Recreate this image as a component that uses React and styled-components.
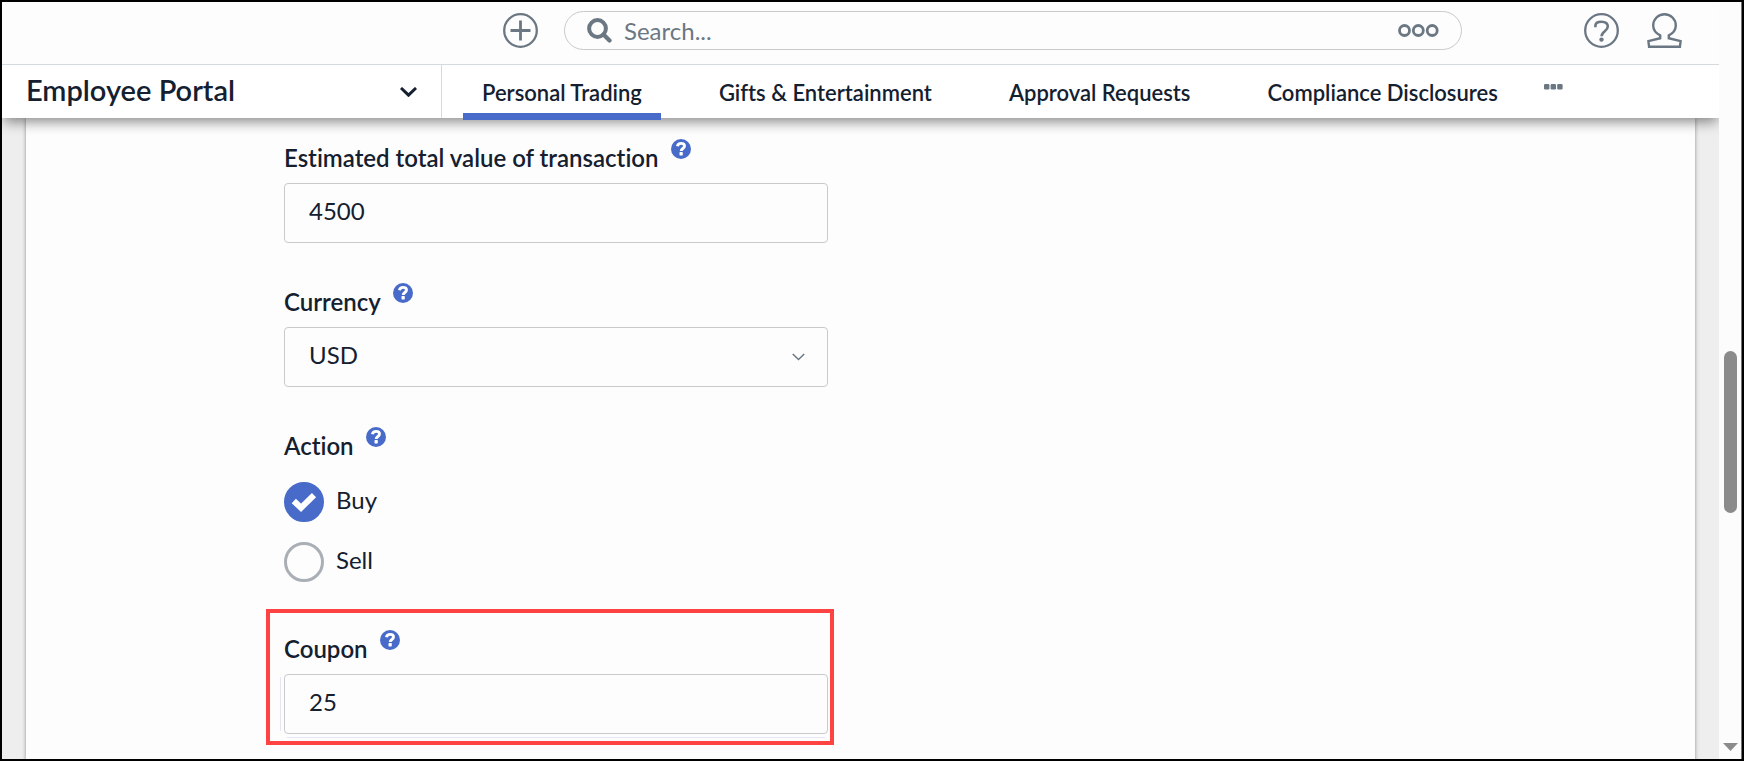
import React, { useState } from 'react';
import styled, { createGlobalStyle } from 'styled-components';

const colors = {
  ink: '#14202f',
  slate: '#6b7782',
  blue: '#486bc9',
  line: '#d5dade',
  border: '#c8cacc',
  panel: '#fdfdfe',
  highlight: '#ff4242',
};

const GlobalStyle = createGlobalStyle`
  *, *::before, *::after {
    box-sizing: border-box;
  }

  body {
    margin: 0;
    color: ${colors.ink};
    font-family: Lato, 'Open Sans', sans-serif;
    font-size: 24px;
    font-variant-ligatures: none;
  }

  button, input, select {
    margin: 0;
    color: inherit;
    font: inherit;
  }
`;

const Frame = styled.div`
  display: flex;
  height: 100vh;
  border: 2px solid #000;
  overflow: hidden;
`;

const Page = styled.div`
  flex: 1;
  min-width: 0;
  display: flex;
  flex-direction: column;
  background: #eee;
  overflow: hidden;
`;

const Header = styled.header`
  position: relative;
  z-index: 1;
  flex: none;
  background: #fff;
  box-shadow: 0 6px 12px -2px rgba(0, 0, 0, 0.45);
`;

const TopBar = styled.div`
  display: flex;
  align-items: center;
  height: 63px;
  padding: 0 37px 6px 501px;
  border-bottom: 1px solid ${colors.line};
  background: ${colors.panel};
`;

const IconButton = styled.button`
  display: flex;
  flex: none;
  padding: 0;
  border: 0;
  background: none;
  color: ${colors.slate};
  cursor: pointer;
`;

const SearchBox = styled.label`
  flex: 1;
  min-width: 0;
  display: flex;
  align-items: center;
  height: 39px;
  margin-left: 26px;
  padding: 0 22px;
  border: 1px solid ${colors.border};
  border-radius: 20px;
  color: ${colors.slate};
`;

const SearchInput = styled.input`
  flex: 1;
  min-width: 0;
  margin-left: 12px;
  padding: 0;
  border: 0;
  outline: 0;
  background: none;

  &::placeholder {
    color: ${colors.slate};
    opacity: 1;
  }
`;

const UserActions = styled.div`
  display: flex;
  gap: 28px;
  margin-left: 122px;
`;

const NavBar = styled.div`
  display: flex;
  height: 53px;
`;

const PortalButton = styled.button`
  flex: none;
  display: flex;
  align-items: center;
  justify-content: space-between;
  width: 440px;
  padding: 0 24px 4px;
  border: 0;
  border-right: 1px solid ${colors.line};
  background: none;
  font-size: 29px;
  font-weight: 600;
  cursor: pointer;

  svg {
    margin-top: 4px;
  }
`;

const Tabs = styled.nav`
  display: flex;
  gap: 39px;
  margin-left: 21px;
`;

const Tab = styled.a`
  display: flex;
  align-items: center;
  height: 55px;
  padding: 7px 19px 0;
  border-bottom: 7px solid ${(p) => (p.$active ? colors.blue : 'transparent')};
  color: inherit;
  font-size: 22px;
  font-weight: 600;
  text-decoration: none;
  white-space: nowrap;
`;

const MoreButton = styled(IconButton)`
  align-items: center;
  height: 44px;
  margin-left: 27px;
`;

const Panel = styled.main`
  flex: 1;
  margin: 0 24px;
  padding: 20px 0 20px 258px;
  background: ${colors.panel};
  box-shadow: 0 0 4px rgba(0, 0, 0, 0.4);
`;

const Form = styled.form`
  display: flex;
  flex-direction: column;
  gap: 39px;
  max-width: 544px;
`;

const Group = styled.div`
  display: flex;
  flex-direction: column;
`;

const LabelRow = styled.div`
  display: flex;
  align-items: flex-start;
  gap: 12px;
  height: 45px;
  font-weight: 600;
  line-height: 39px;
`;

const HelpButton = styled(IconButton)`
  margin-top: 1px;
  color: ${colors.blue};
`;

const Control = styled.input`
  width: 100%;
  height: 60px;
  padding: 0 24px 5px;
  border: 1px solid ${colors.border};
  border-radius: 4px;
  outline: 0;
  background: ${colors.panel};
`;

const SelectWrap = styled.div`
  position: relative;
  display: flex;

  svg {
    position: absolute;
    right: 23px;
    top: 26px;
    color: ${colors.slate};
    pointer-events: none;
  }
`;

const SelectControl = styled(Control).attrs({ as: 'select' })`
  appearance: none;
`;

const RadioList = styled.div`
  display: flex;
  flex-direction: column;
  gap: 20px;
  padding-top: 11px;
`;

const RadioLabel = styled.label`
  display: flex;
  gap: 12px;
  height: 40px;
  line-height: 36px;
  cursor: pointer;
`;

const Radio = styled.input.attrs({ type: 'radio' })`
  appearance: none;
  display: grid;
  width: 40px;
  height: 40px;
  border: 3px solid #aaafb5;
  border-radius: 50%;
  background: ${colors.panel};

  &:checked {
    border-color: ${colors.blue};
    background: ${colors.blue};
  }
`;

const RadioMark = styled.span`
  display: grid;

  > * {
    grid-area: 1 / 1;
    place-self: center;
  }

  svg {
    color: #fff;
    pointer-events: none;
  }
`;

const Highlight = styled.div`
  margin: -12px -6px 0 -18px;
  padding: 16px 2px 7px 14px;
  border: 4px solid ${colors.highlight};
`;

const FocusFrame = styled.div`
  position: relative;

  &::before,
  &::after {
    content: '';
    position: absolute;
    background: #e4e6f4;
  }

  &::before {
    left: -4px;
    top: 3px;
    bottom: 3px;
    width: 1px;
  }

  &::after {
    left: 3px;
    right: 3px;
    bottom: -4px;
    height: 1px;
  }
`;

const ScrollTrack = styled.div`
  flex: none;
  display: flex;
  flex-direction: column;
  align-items: center;
  width: 23px;
  padding-bottom: 8px;
  border-right: 1px solid #77736a;
  background: #fcfcfc;
  color: #8b8b8b;
`;

const ScrollSpace = styled.div`
  flex: ${(p) => p.$grow};
`;

const ScrollThumb = styled.div`
  width: 13px;
  height: 162px;
  border-radius: 7px;
  background: currentColor;
`;

const PlusIcon = () => (
  <svg width="35" height="35" viewBox="0 0 35 35" fill="none" stroke="currentColor">
    <circle cx="17.5" cy="17.5" r="16.3" strokeWidth="2.3" />
    <path d="M17.5 7.5v20M7.5 17.5h20" strokeWidth="2.8" />
  </svg>
);

const SearchIcon = () => (
  <svg width="25" height="25" viewBox="0 0 25 25" fill="none" stroke="currentColor">
    <circle cx="10.5" cy="10.5" r="8.4" strokeWidth="4" />
    <path d="M16.5 16.5l6 6" strokeWidth="4.2" strokeLinecap="round" />
  </svg>
);

const RingsIcon = () => (
  <svg width="41" height="13" viewBox="0 0 41 13" fill="none" stroke="currentColor" strokeWidth="2.8">
    <circle cx="6.5" cy="6.5" r="5" />
    <circle cx="20.3" cy="6.5" r="5" />
    <circle cx="34.2" cy="6.5" r="5" />
  </svg>
);

const HelpOutlineIcon = () => (
  <svg width="35" height="35" viewBox="0 0 35 35" fill="none" stroke="currentColor">
    <circle cx="17.5" cy="17.5" r="16.3" strokeWidth="2.3" />
    <path
      d="M11.4 14.2v-1.4c0-2.4 2.1-4 6.1-4s6.3 1.8 6.3 4.8c0 4.6-6.2 4.6-6.2 9.6"
      strokeWidth="2.6"
    />
    <circle cx="17.5" cy="26.6" r="2.2" fill="currentColor" stroke="none" />
  </svg>
);

const UserIcon = () => (
  <svg width="35" height="35" viewBox="0 0 35 35" fill="none" stroke="currentColor" strokeWidth="2.4">
    <path d="M13.200 22.400C8.500 20 6.200 16.400 6.200 12.500a11.300 11.300 0 0 1 22.600 0c0 3.900-2.300 7.500-7 9.900v2.800l11.800 3-.7 5.600H2.100l-.7-5.600 11.800-3z" />
  </svg>
);

const DotsIcon = () => (
  <svg width="19" height="6" viewBox="0 0 19 6" fill="currentColor">
    <rect width="5.400" height="5.400" rx="1.200" />
    <rect x="6.600" width="5.400" height="5.400" rx="1.200" />
    <rect x="13.200" width="5.400" height="5.400" rx="1.200" />
  </svg>
);

const HelpIcon = () => (
  <svg width="20" height="20" viewBox="0 0 20 20">
    <circle cx="10" cy="10" r="10" fill="currentColor" />
    <path
      d="M6.400 7.300C6.800 5.300 8.200 4.400 10.100 4.400c2 0 3.400 1.100 3.400 2.700 0 2.600-3.300 2.300-3.300 4.900"
      fill="none"
      stroke="#fff"
      strokeWidth="2.900"
    />
    <rect x="8.500" y="13.100" width="3.300" height="3.300" rx=".6" fill="#fff" />
  </svg>
);

const ChevronIcon = ({ width = 17, strokeWidth = 3 }) => (
  <svg
    width={width}
    height={Math.round(width * 0.6)}
    viewBox="0 0 17 10"
    fill="none"
    stroke="currentColor"
    strokeWidth={strokeWidth}
  >
    <path d="M1 1l7.500 7.200L16 1" />
  </svg>
);

const CheckIcon = () => (
  <svg width="26" height="20" viewBox="0 0 26 20" fill="none" stroke="currentColor" strokeWidth="6">
    <path d="M2.800 9l7.200 6.800L23 3.200" />
  </svg>
);

const FieldLabel = ({ htmlFor, id, children }) => (
  <LabelRow>
    {htmlFor ? <label htmlFor={htmlFor}>{children}</label> : <span id={id}>{children}</span>}
    <HelpButton type="button" aria-label={`Help: ${children}`}>
      <HelpIcon />
    </HelpButton>
  </LabelRow>
);

const tabs = ['Personal Trading', 'Gifts & Entertainment', 'Approval Requests', 'Compliance Disclosures'];

const App = () => {
  const [action, setAction] = useState('Buy');

  return (
    <Frame>
      <GlobalStyle />
      <Page>
        <Header>
          <TopBar>
            <IconButton aria-label="Add">
              <PlusIcon />
            </IconButton>
            <SearchBox>
              <SearchIcon />
              <SearchInput type="text" placeholder="Search..." aria-label="Search" />
              <IconButton type="button" aria-label="Search options">
                <RingsIcon />
              </IconButton>
            </SearchBox>
            <UserActions>
              <IconButton aria-label="Help">
                <HelpOutlineIcon />
              </IconButton>
              <IconButton aria-label="Account">
                <UserIcon />
              </IconButton>
            </UserActions>
          </TopBar>
          <NavBar>
            <PortalButton>
              Employee Portal
              <ChevronIcon />
            </PortalButton>
            <Tabs>
              {tabs.map((tab, i) => (
                <Tab key={tab} href="#" $active={i === 0}>
                  {tab}
                </Tab>
              ))}
            </Tabs>
            <MoreButton aria-label="More tabs">
              <DotsIcon />
            </MoreButton>
          </NavBar>
        </Header>
        <Panel>
          <Form>
            <Group>
              <FieldLabel htmlFor="total">Estimated total value of transaction</FieldLabel>
              <Control id="total" type="text" defaultValue="4500" />
            </Group>
            <Group>
              <FieldLabel htmlFor="currency">Currency</FieldLabel>
              <SelectWrap>
                <SelectControl id="currency" defaultValue="USD">
                  <option>USD</option>
                </SelectControl>
                <ChevronIcon width={13} strokeWidth={2} />
              </SelectWrap>
            </Group>
            <Group role="radiogroup" aria-labelledby="action">
              <FieldLabel id="action">Action</FieldLabel>
              <RadioList>
                {['Buy', 'Sell'].map((name) => (
                  <RadioLabel key={name}>
                    <RadioMark>
                      <Radio name="action" checked={action === name} onChange={() => setAction(name)} />
                      {action === name && <CheckIcon />}
                    </RadioMark>
                    {name}
                  </RadioLabel>
                ))}
              </RadioList>
            </Group>
            <Highlight>
              <FieldLabel htmlFor="coupon">Coupon</FieldLabel>
              <FocusFrame>
                <Control id="coupon" type="text" defaultValue="25" />
              </FocusFrame>
            </Highlight>
          </Form>
        </Panel>
      </Page>
      <ScrollTrack aria-hidden="true">
        <ScrollSpace $grow={349} />
        <ScrollThumb />
        <ScrollSpace $grow={230} />
        <svg width="15" height="8" viewBox="0 0 15 8" fill="currentColor">
          <path d="M0 0h15L7.500 8z" />
        </svg>
      </ScrollTrack>
    </Frame>
  );
};

export default App;
